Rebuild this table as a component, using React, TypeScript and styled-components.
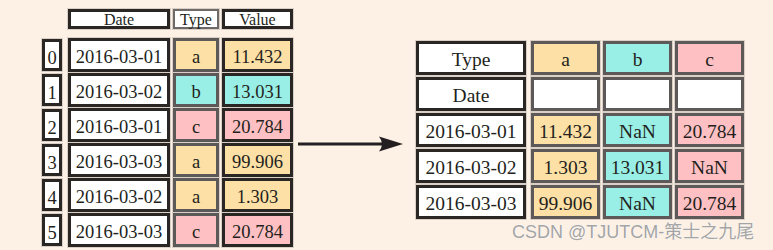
import React from "react";
import styled, { createGlobalStyle, css } from "styled-components";

const Global = createGlobalStyle`
  html, body { margin: 0; padding: 0; background: #fdf0e4; }
  body { width: 773px; height: 250px; overflow: hidden; }
`;

const C = {
  bg: "#fdf0e4",
  dark: "#2a2624",
  gray: "#5d5958",
  light: "#d9cfc6",
  text: "#231f20",
  a: "#fde0a5",
  b: "#99efe5",
  c: "#fec0c2",
};

type Tone = "a" | "b" | "c" | "white";
const fill = (t: Tone) => (t === "white" ? "#ffffff" : C[t]);

const Page = styled.div`
  position: relative;
  width: 773px;
  height: 250px;
  display: flex;
  align-items: flex-start;
  padding: 9px 0 0 42px;
  box-sizing: border-box;
  font-family: "Liberation Serif", "Times New Roman", serif;
  color: ${C.text};
`;

const LeftGrid = styled.div`
  display: grid;
  grid-template-columns: 23px 102px 46px 71px;
  grid-template-rows: 28px repeat(6, 34px);
  column-gap: 3px;
  row-gap: 1px;
`;

const cellBase = css`
  box-sizing: border-box;
  display: flex;
  align-items: center;
  justify-content: center;
  white-space: nowrap;
`;

const HeadCell = styled.div<{ $muted?: boolean }>`
  ${cellBase};
  height: 20px;
  align-self: start;
  font-size: 16px;
  line-height: 1;
  background: #fff;
  border: ${(p) => (p.$muted ? `2px solid #6e6a69` : `3px solid ${C.dark}`)};
  box-shadow: 0 0 0 1px ${C.light};
  padding-top: 1px;
`;

const Spacer = styled.div``;

const IndexCell = styled.div`
  ${cellBase};
  width: 20px;
  height: 32px;
  align-self: center;
  justify-self: start;
  background: #fff;
  border: 3px solid ${C.dark};
  box-shadow: 0 0 0 1px ${C.light};
  font-size: 18.5px;
  line-height: 1;
  padding-top: 6px;
`;

const DataCell = styled.div<{ $tone: Tone; $muted?: boolean; $size?: number }>`
  ${cellBase};
  background: ${(p) => fill(p.$tone)};
  border: 3px solid ${(p) => (p.$muted ? C.gray : C.dark)};
  box-shadow: 0 0 0 1px ${C.light};
  font-size: ${(p) => p.$size ?? 18.5}px;
  line-height: 1;
  padding-top: 4px;
`;

const ArrowBox = styled.div`
  margin: 127px 0 0 5px;
  width: 105px;
  height: 16px;
  display: flex;
`;

const RightGrid = styled.div`
  margin: 32px 0 0 13px;
  display: grid;
  grid-template-columns: 112px 69px 69px 69px;
  grid-auto-rows: 34px;
  column-gap: 3px;
  row-gap: 2px;
`;

const KeyCell = styled(DataCell)`
  width: 110px;
`;

const Watermark = styled.div`
  position: absolute;
  left: 512px;
  top: 223px;
  font-family: "Liberation Sans", "Noto Sans CJK SC", sans-serif;
  font-size: 18px;
  line-height: 18px;
  color: #a4a4a4;
  text-shadow: 0 0 1px #ffffff, 0 0 1px #ffffff;
  white-space: nowrap;
`;

const rows: { date: string; type: "a" | "b" | "c"; value: string }[] = [
  { date: "2016-03-01", type: "a", value: "11.432" },
  { date: "2016-03-02", type: "b", value: "13.031" },
  { date: "2016-03-01", type: "c", value: "20.784" },
  { date: "2016-03-03", type: "a", value: "99.906" },
  { date: "2016-03-02", type: "a", value: "1.303" },
  { date: "2016-03-03", type: "c", value: "20.784" },
];

const pivot: { date: string; vals: string[] }[] = [
  { date: "2016-03-01", vals: ["11.432", "NaN", "20.784"] },
  { date: "2016-03-02", vals: ["1.303", "13.031", "NaN"] },
  { date: "2016-03-03", vals: ["99.906", "NaN", "20.784"] },
];

const tones: ("a" | "b" | "c")[] = ["a", "b", "c"];

const Arrow = () => (
  <svg width="105" height="16" viewBox="0 0 105 16">
    <rect x="0" y="6.5" width="88" height="3" fill="#231f20" />
    <path d="M105 8 L81 0.5 Q87 8 81 15.5 Z" fill="#231f20" />
  </svg>
);

export default function App() {
  return (
    <>
      <Global />
      <Page>
        <LeftGrid>
          <Spacer />
          <HeadCell>Date</HeadCell>
          <HeadCell $muted>Type</HeadCell>
          <HeadCell>Value</HeadCell>
          {rows.map((r, i) => (
            <React.Fragment key={i}>
              <IndexCell>{i}</IndexCell>
              <DataCell $tone="white">{r.date}</DataCell>
              <DataCell $tone={r.type} $muted>
                {r.type}
              </DataCell>
              <DataCell $tone={r.type}>{r.value}</DataCell>
            </React.Fragment>
          ))}
        </LeftGrid>
        <ArrowBox>
          <Arrow />
        </ArrowBox>
        <RightGrid>
          <KeyCell $tone="white" $size={19.5}>
            Type
          </KeyCell>
          {tones.map((t) => (
            <DataCell key={t} $tone={t} $muted $size={19.5}>
              {t}
            </DataCell>
          ))}
          <KeyCell $tone="white" $size={19.5}>
            Date
          </KeyCell>
          {tones.map((t) => (
            <DataCell key={t} $tone="white" $muted />
          ))}
          {pivot.map((p) => (
            <React.Fragment key={p.date}>
              <KeyCell $tone="white" $size={19.5}>
                {p.date}
              </KeyCell>
              {p.vals.map((v, j) => (
                <DataCell key={j} $tone={tones[j]} $muted $size={19.5}>
                  {v}
                </DataCell>
              ))}
            </React.Fragment>
          ))}
        </RightGrid>
        <Watermark>CSDN @TJUTCM-策士之九尾</Watermark>
      </Page>
    </>
  );
}
